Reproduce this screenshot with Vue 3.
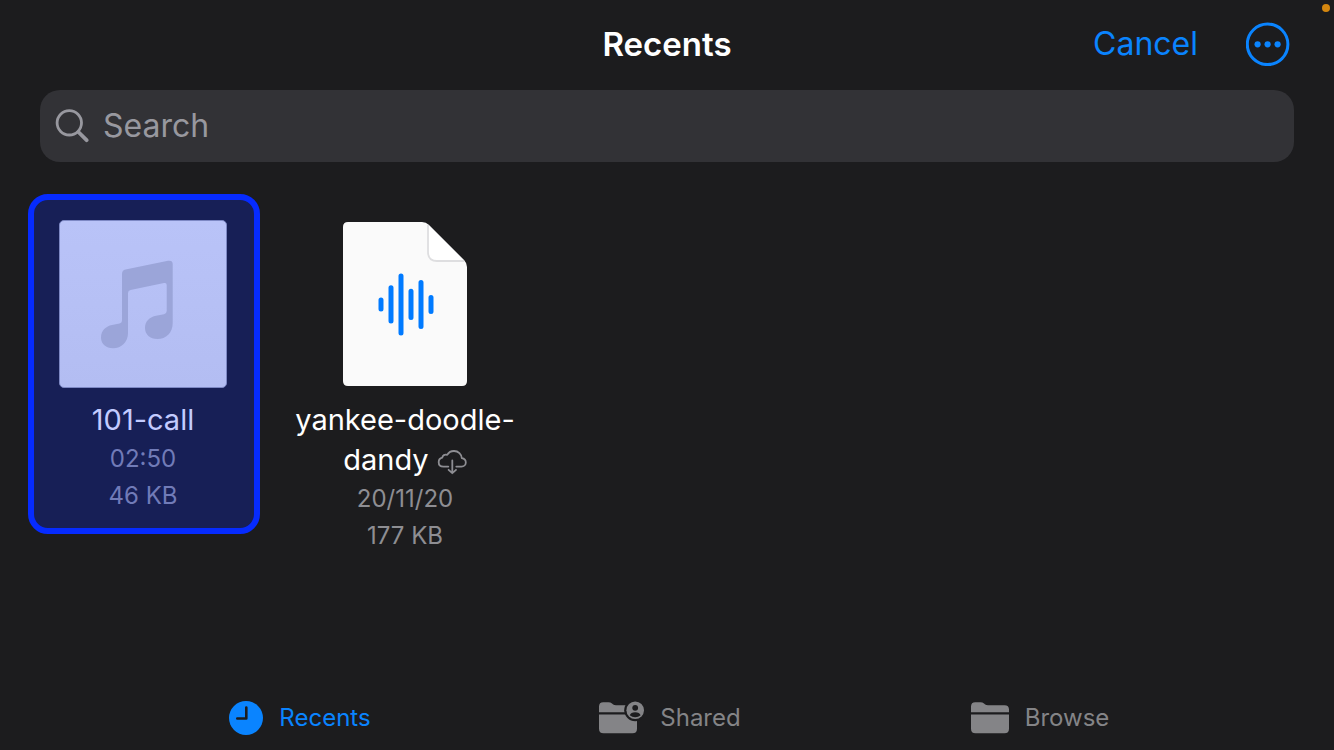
<script setup>
import { ref } from 'vue'

const query = ref('')
const selected = ref('101-call')
const activeTab = ref('Recents')

const files = [
  { name: '101-call', kind: 'music', detail: '02:50', size: '46 KB', cloud: false },
  { name: 'yankee-doodle-dandy', kind: 'audio', detail: '20/11/20', size: '177 KB', cloud: true },
]
const tabs = ['Recents', 'Shared', 'Browse']
</script>

<template>
  <div class="page">
    <span class="mic-dot"></span>
    <header class="bar">
      <h1 class="title">Recents</h1>
      <div class="actions">
        <button class="cancel" type="button">Cancel</button>
        <button class="more" type="button" aria-label="More">
          <svg width="44" height="44" viewBox="0 0 44 44">
            <circle cx="21.6" cy="22.3" r="20.3" fill="none" stroke="currentColor" stroke-width="3" />
            <circle cx="11.6" cy="22.3" r="3.1" fill="currentColor" />
            <circle cx="21.6" cy="22.3" r="3.1" fill="currentColor" />
            <circle cx="31.6" cy="22.3" r="3.1" fill="currentColor" />
          </svg>
        </button>
      </div>
    </header>

    <label class="search">
      <svg width="34" height="34" viewBox="0 0 34 34" fill="none" stroke="currentColor" stroke-linecap="round">
        <circle cx="14.3" cy="13.8" r="12.2" stroke-width="2.8" />
        <path d="M23.4 23 L31.6 31.2" stroke-width="3.8" />
      </svg>
      <input v-model="query" type="text" placeholder="Search" aria-label="Search" />
    </label>

    <main class="files">
      <button
        v-for="f in files"
        :key="f.name"
        type="button"
        class="file"
        :class="{ selected: f.name === selected }"
        @click="selected = f.name"
      >
        <svg v-if="f.kind === 'music'" class="thumb" width="168" height="168" viewBox="0 0 168 168">
          <defs>
            <linearGradient id="cover" x1="0" y1="0" x2="0" y2="1">
              <stop offset="0" stop-color="#b9c3f8" />
              <stop offset="1" stop-color="#b3bdf2" />
            </linearGradient>
          </defs>
          <rect x="0.5" y="0.5" width="167" height="167" rx="4.5" fill="url(#cover)" stroke="#7d88c4" />
          <path
            fill="#9ba5d9"
            d="M63 54 Q63 50.3 66.5 49.5 L109 40.8 Q113.7 40 113.7 44 V103 C113.7 113 107 119 98.5 119 C91 119 86 114.5 86 108 C86 101 91 97 97 95.8 L105 94.2 Q107.7 93.5 107.7 91 V65 Q107.7 62.4 105 63 L71.5 70 Q69 70.5 69 73 V113 C69 122 62.5 128.3 54 128.3 C47 128.3 42 124 42 117.5 C42 110.5 47 106.3 53 105 L60.5 103.5 Q63 103 63 100 Z"
          />
        </svg>
        <svg v-else class="thumb" width="168" height="168" viewBox="0 0 168 168">
          <path
            fill="#fafafa"
            d="M27 2 H101 Q105 2 108 5 L143 40 Q146 43 146 47 V161 Q146 166 141 166 H27 Q22 166 22 161 V7 Q22 2 27 2 Z"
          />
          <path fill="#fff" d="M107 4.5 L143.5 41 H116 Q107 41 107 32 Z" />
          <path fill="none" stroke="#dedee0" stroke-width="1.8" d="M107 5 V32 Q107 41 116 41 H143" />
          <path
            fill="none"
            stroke="#007aff"
            stroke-width="5"
            stroke-linecap="round"
            d="M60 80 V89 M70 67.7 V101 M80 56 V113 M90 71.3 V97.5 M100 62.5 V106.5 M110 77.5 V91.5"
          />
        </svg>
        <span class="name">
          {{ f.name }}
          <svg v-if="f.cloud" class="cloud" width="30" height="26" viewBox="0 0 30 26" fill="none" stroke="#8e8e93" stroke-width="1.8" stroke-linecap="round" stroke-linejoin="round">
            <path d="M11.3 17.6 H6.5 C3.6 17.6 1.7 15.7 1.7 13.2 C1.7 10.8 3.2 9.1 5.3 8.7 C5.4 6.4 7.8 5 10.2 5.9 C11.6 3.4 14 2 17 2 C21.3 2 24.6 5.1 24.8 9.2 C27.2 9.6 28.8 11.2 28.8 13.5 C28.8 15.9 26.9 17.6 24.5 17.6 H19.3" />
            <path d="M15.3 11.5 V24 M11.6 20.8 L15.3 24.2 L19 20.8" />
          </svg>
        </span>
        <span class="meta">{{ f.detail }}</span>
        <span class="meta">{{ f.size }}</span>
      </button>
    </main>

    <nav class="tabs">
      <button
        v-for="t in tabs"
        :key="t"
        type="button"
        class="tab"
        :class="{ active: t === activeTab }"
        @click="activeTab = t"
      >
        <svg v-if="t === 'Recents'" width="34" height="34" viewBox="0 0 34 34">
          <circle cx="17" cy="17" r="17" fill="currentColor" />
          <path d="M17.3 6.5 V17.5 H8.3" fill="none" stroke="#1c1c1e" stroke-width="2.6" stroke-linecap="round" stroke-linejoin="round" />
        </svg>
        <svg v-else :width="t === 'Shared' ? 45 : 38" height="34" :viewBox="t === 'Shared' ? '0 0 45 34' : '0 0 38 34'">
          <path
            fill="currentColor"
            d="M0 11.3 V5.5 Q0 1.2 4.3 1.2 H9.5 Q11.5 1.2 13 2.5 L14.2 3.4 Q15.3 4.2 17 4.2 H33.5 Q38 4.2 38 8.5 V11.3 Z M0 13.5 H38 V27.7 Q38 32.2 33.5 32.2 H4.5 Q0 32.2 0 27.7 Z"
          />
          <template v-if="t === 'Shared'">
            <circle cx="36.2" cy="9.2" r="11" fill="#1c1c1e" />
            <circle cx="36.2" cy="9.2" r="8.8" fill="currentColor" />
            <circle cx="36.2" cy="6.8" r="2.9" fill="#1c1c1e" />
            <path d="M30.8 14.2 Q31.8 11.2 36.2 11.2 Q40.6 11.2 41.6 14.2 Q39.4 16.2 36.2 16.2 Q33 16.2 30.8 14.2 Z" fill="#1c1c1e" />
          </template>
        </svg>
        <span>{{ t }}</span>
      </button>
    </nav>
  </div>
</template>

<style>
body {
  margin: 0;
  background: #1c1c1e;
}
</style>

<style scoped>
.page {
  position: relative;
  box-sizing: border-box;
  min-height: 100vh;
  display: flex;
  flex-direction: column;
  background: #1c1c1e;
  color: #fff;
  font-family: Inter, "Liberation Sans", sans-serif;
}
button {
  margin: 0;
  padding: 0;
  border: 0;
  background: none;
  color: inherit;
  font: inherit;
  cursor: pointer;
}
svg {
  display: block;
  flex: none;
}
.mic-dot {
  position: absolute;
  top: 4px;
  right: 4px;
  width: 8px;
  height: 8px;
  border-radius: 50%;
  background: #d4860f;
}
.bar {
  display: grid;
  grid-template-columns: 1fr auto 1fr;
  align-items: center;
  height: 88px;
  padding: 0 44px;
}
.title {
  grid-column: 2;
  margin: 0;
  font-size: 33px;
  font-weight: 600;
  line-height: 40px;
}
.actions {
  display: flex;
  justify-content: flex-end;
  align-items: center;
  gap: 48px;
  color: #0a84ff;
}
.cancel {
  font-size: 32px;
  line-height: 40px;
}
.search {
  display: flex;
  align-items: center;
  gap: 14px;
  height: 72px;
  margin: 2px 40px 0;
  padding: 0 15px;
  box-sizing: border-box;
  border-radius: 20px;
  background: #323236;
  color: #98989f;
}
.search input {
  flex: 1;
  min-width: 0;
  padding: 0;
  border: 0;
  outline: 0;
  background: none;
  color: #fff;
  font: inherit;
  font-size: 32px;
  line-height: 40px;
}
.search input::placeholder {
  color: #98989f;
  opacity: 1;
}
.files {
  flex: 1;
  display: flex;
  flex-wrap: wrap;
  align-items: flex-start;
  gap: 30px;
  padding: 32px 28px;
}
.file {
  box-sizing: border-box;
  width: 232px;
  display: flex;
  flex-direction: column;
  align-items: center;
  padding: 20px 2px 14px 0;
  border: 6px solid transparent;
  border-radius: 20px;
  text-align: center;
}
.file.selected {
  border-color: #062bff;
  background: #171f56;
}
.thumb {
  margin-bottom: 12px;
}
.name {
  margin: 0 -6px;
  font-size: 29px;
  line-height: 40px;
}
.cloud {
  display: inline-block;
  vertical-align: -5px;
}
.meta {
  color: #8e8e93;
  font-size: 24px;
  line-height: 37px;
}
.selected .name {
  color: #c3cbff;
}
.selected .meta {
  color: #717bb8;
}
.tabs {
  display: grid;
  grid-template-columns: repeat(3, 1fr);
  height: 64px;
  padding: 0 109px 0 115px;
}
.tab {
  display: flex;
  align-items: center;
  justify-content: center;
  gap: 16px;
  color: #848487;
  font-size: 24px;
  line-height: 32px;
}
.tab.active {
  color: #0a84ff;
}
</style>
